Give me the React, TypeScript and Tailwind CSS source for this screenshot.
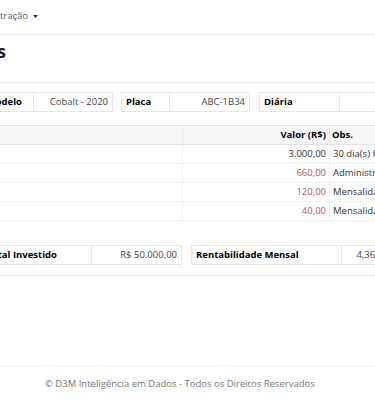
import { ReactNode } from "react"

// cell whose text is clipped on the left (page is scrolled sideways)
function Clip({ w, children, className = "" }: { w: string; children: ReactNode; className?: string }) {
  return (
    <div className={`${w} shrink-0 overflow-hidden flex justify-end whitespace-nowrap ${className}`}>
      <div className="shrink-0 flex items-center">{children}</div>
    </div>
  )
}

function Cell({ w, children, className = "" }: { w: string; children?: ReactNode; className?: string }) {
  return (
    <div className={`${w} shrink-0 h-full flex items-center px-[4px] border border-[#e6e6e6] whitespace-nowrap overflow-hidden ${className}`}>
      {children}
    </div>
  )
}

const rows = [
  { valor: "3.000,00", obs: "30 dia(s) faturados", red: false },
  { valor: "660,00", obs: "Administração", red: true },
  { valor: "120,00", obs: "Mensalidade rastreador", red: true },
  { valor: "40,00", obs: "Mensalidade seguro", red: true },
]

export default function App() {
  return (
    <div className="w-[375px] h-[399px] overflow-hidden bg-white text-[9.5px] text-[#333] font-['Open_Sans',sans-serif]">
      {/* navbar */}
      <nav className="h-[33px] bg-white shadow-[0_2px_4px_rgba(0,0,0,0.07)] flex items-center relative">
        <Clip w="w-[39px]" className="text-[#555] text-[9.5px]">
          <span>Administração</span>
          <svg width="5" height="3" viewBox="0 0 5 3" className="ml-[5px] mr-[1px]">
            <path d="M0 0h5L2.5 3z" fill="#333" />
          </svg>
        </Clip>
      </nav>

      {/* title */}
      <div className="mt-[7px] h-[22px] flex items-center">
        <Clip w="w-[6px]" className="text-[18px] leading-[22px] font-bold text-[#222]">
          <span>Simulações</span>
        </Clip>
      </div>

      <div className="mt-[20px] border-t border-[#ececec]" />

      {/* vehicle info */}
      <div className="mt-[9px] h-[20px] flex">
        <div className="w-[34px] shrink-0 h-full border border-l-0 border-[#e6e6e6] overflow-hidden flex justify-end items-center pr-[11px] whitespace-nowrap">
          <span className="shrink-0 font-bold text-black">Modelo</span>
        </div>
        <Cell w="w-[79px]" className="justify-end border-l-0 text-[#444]">Cobalt - 2020</Cell>
        <div className="w-[8px] shrink-0" />
        <Cell w="w-[49px]" className="font-bold text-black">Placa</Cell>
        <Cell w="w-[80px]" className="justify-end border-l-0 text-[#444]">ABC-1B34</Cell>
        <div className="w-[9px] shrink-0" />
        <Cell w="w-[81px]" className="font-bold text-black">Diária</Cell>
        <Cell w="w-[60px]" className="border-l-0" />
      </div>

      {/* costs table */}
      <div className="mt-[13px]">
        <div className="h-[20px] flex bg-[#f7f7f7] border-y border-[#e2e2e2]">
          <div className="w-[183px] shrink-0 border-r border-[#ececec]" />
          <div className="w-[147px] shrink-0 flex items-center justify-end pr-[3px] border-r border-[#e6e6e6] font-bold text-black">
            Valor (R$)
          </div>
          <div className="flex-1 flex items-center pl-[2px] font-bold text-black">Obs.</div>
        </div>
        {rows.map((r) => (
          <div key={r.valor} className="h-[19px] flex border-b border-[#eeeeee]">
            <div className="w-[183px] shrink-0 border-r border-[#f0f0f0]" />
            <div
              className={`w-[147px] shrink-0 flex items-center justify-end pr-[3px] border-r border-[#eeeeee] ${
                r.red ? "text-[#b5535e]" : "text-[#333]"
              }`}
            >
              {r.valor}
            </div>
            <div className="flex-1 flex items-center pl-[3px] whitespace-nowrap overflow-hidden">{r.obs}</div>
          </div>
        ))}
      </div>

      {/* summary */}
      <div className="mt-[24px] h-[20px] flex">
        <div className="w-[92px] shrink-0 h-full border border-l-0 border-[#e9e9e9] overflow-hidden flex justify-end items-center pr-[34px] whitespace-nowrap">
          <span className="shrink-0 font-bold text-black">Total Investido</span>
        </div>
        <Cell w="w-[90px]" className="justify-end border-l-0 text-[#444]">R$ 50.000,00</Cell>
        <div className="w-[9px] shrink-0" />
        <Cell w="w-[151px]" className="font-bold text-black">Rentabilidade Mensal</Cell>
        <Cell w="w-[46px]" className="justify-end border-l-0 text-[#444]">4,36%</Cell>
      </div>

      <div className="mt-[10px] border-t border-[#ececec]" />

      {/* footer */}
      <footer className="mt-[89px] border-t border-[#eeeeee] pt-[11px] pl-[45px] text-[#777] whitespace-nowrap leading-[13px]">
        © D3M Inteligência em Dados - Todos os Direitos Reservados
      </footer>
    </div>
  )
}
